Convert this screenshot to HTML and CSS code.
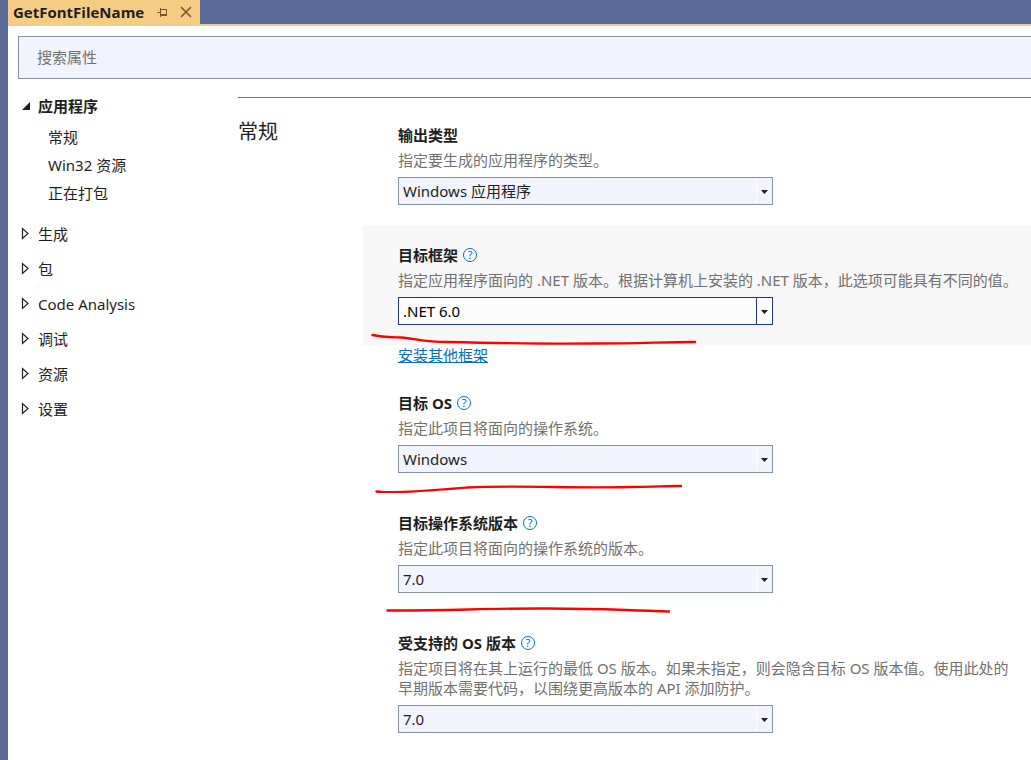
FILE: index.html
```html
<!DOCTYPE html>
<html lang="zh-CN">
<head>
<meta charset="utf-8">
<title>GetFontFileName</title>
<link rel="stylesheet" href="styles.css">
</head>
<body>
<div class="window">
  <header class="tabstrip">
    <div class="tab">
      <span class="tab-title">GetFontFileName</span>
      <button class="tab-button" type="button" aria-label="固定">
        <svg width="12" height="10" viewBox="0 0 12 10" fill="none" stroke="#81542a"><path d="M1 5.500H4M4.500 1V10M5 2.500H10.500V7M5 7.500H11M5 8.500H11" /></svg>
      </button>
      <button class="tab-button" type="button" aria-label="关闭">
        <svg width="12" height="12" viewBox="0 0 12 12" fill="none" stroke="#81542a" stroke-width="1.600"><path d="M1 1L11 11M11 1L1 11" /></svg>
      </button>
    </div>
  </header>
  <div class="document">
    <input class="search" type="search" placeholder="搜索属性" aria-label="搜索属性">
    <div class="columns">
      <nav class="tree">
        <a class="node current" href="#app"><svg class="twist" width="10" height="10" viewBox="0 0 10 10"><path d="M9 1V9H1Z" fill="#1e1e1e"/></svg>应用程序</a>
        <div class="children">
          <a class="leaf" href="#general">常规</a>
          <a class="leaf" href="#win32">Win32 资源</a>
          <a class="leaf" href="#packaging">正在打包</a>
        </div>
        <a class="node" href="#build"><svg class="twist" width="10" height="14" viewBox="0 0 10 14"><path d="M1.500 1.500V11.500L7 6.500Z" fill="none" stroke="#1e1e1e" stroke-width="1.200"/></svg>生成</a>
        <a class="node" href="#package"><svg class="twist" width="10" height="14" viewBox="0 0 10 14"><path d="M1.500 1.500V11.500L7 6.500Z" fill="none" stroke="#1e1e1e" stroke-width="1.200"/></svg>包</a>
        <a class="node" href="#analysis"><svg class="twist" width="10" height="14" viewBox="0 0 10 14"><path d="M1.500 1.500V11.500L7 6.500Z" fill="none" stroke="#1e1e1e" stroke-width="1.200"/></svg>Code Analysis</a>
        <a class="node" href="#debug"><svg class="twist" width="10" height="14" viewBox="0 0 10 14"><path d="M1.500 1.500V11.500L7 6.500Z" fill="none" stroke="#1e1e1e" stroke-width="1.200"/></svg>调试</a>
        <a class="node" href="#resources"><svg class="twist" width="10" height="14" viewBox="0 0 10 14"><path d="M1.500 1.500V11.500L7 6.500Z" fill="none" stroke="#1e1e1e" stroke-width="1.200"/></svg>资源</a>
        <a class="node" href="#settings"><svg class="twist" width="10" height="14" viewBox="0 0 10 14"><path d="M1.500 1.500V11.500L7 6.500Z" fill="none" stroke="#1e1e1e" stroke-width="1.200"/></svg>设置</a>
      </nav>
      <main class="section" id="general">
        <h1 class="section-title">常规</h1>
        <div class="fields">
          <div class="field">
            <div class="label-row"><label for="output">输出类型</label></div>
            <p class="hint">指定要生成的应用程序的类型。</p>
            <div class="combo"><select id="output"><option>Windows 应用程序</option></select><span class="arrow"></span></div>
          </div>
          <div class="field active">
            <div class="label-row"><label for="framework">目标框架</label><button class="help" type="button" aria-label="帮助">?</button></div>
            <p class="hint">指定应用程序面向的 .NET 版本。根据计算机上安装的 .NET 版本，此选项可能具有不同的值。</p>
            <div class="combo"><select id="framework"><option>.NET 6.0</option></select><span class="arrow"></span></div>
            <svg class="mark" width="350" height="20" viewBox="0 0 350 20"><path d="M9.500 10C18 12 25 12 38 12.500C54 14 62 17 84 17C130 18 185 19 230 18.500C275 18.500 302 17 332 17"/></svg>
          </div>
          <div class="link-row"><a href="#install">安装其他框架</a></div>
          <div class="field">
            <div class="label-row"><label for="os">目标 OS</label><button class="help" type="button" aria-label="帮助">?</button></div>
            <p class="hint">指定此项目将面向的操作系统。</p>
            <div class="combo"><select id="os"><option>Windows</option></select><span class="arrow"></span></div>
            <svg class="mark" width="350" height="20" viewBox="0 0 350 20"><path d="M13.500 18.500C28 21 75 17 105 14.500C150 12 215 15.500 265 14C290 14 302 13 318 13"/></svg>
          </div>
          <div class="field">
            <div class="label-row"><label for="osver">目标操作系统版本</label><button class="help" type="button" aria-label="帮助">?</button></div>
            <p class="hint">指定此项目将面向的操作系统的版本。</p>
            <div class="combo"><select id="osver"><option>7.0</option></select><span class="arrow"></span></div>
            <svg class="mark" width="350" height="20" viewBox="0 0 350 20"><path d="M24.500 17.500C85 18 125 15 185 15.500C240 15.500 252 17 306 18.500"/></svg>
          </div>
          <div class="field">
            <div class="label-row"><label for="supported">受支持的 OS 版本</label><button class="help" type="button" aria-label="帮助">?</button></div>
            <p class="hint">指定项目将在其上运行的最低 OS 版本。如果未指定，则会隐含目标 OS 版本值。使用此处的早期版本需要代码，以围绕更高版本的 API 添加防护。</p>
            <div class="combo"><select id="supported"><option>7.0</option></select><span class="arrow"></span></div>
          </div>
        </div>
      </main>
    </div>
  </div>
</div>
</body>
</html>
```
FILE: styles.css
```css
* { box-sizing: border-box; }

body {
  margin: 0;
  background: #5d6b99;
  color: #1e1e1e;
  font-family: "Noto Sans", "Noto Sans CJK SC", sans-serif;
  font-size: 15px;
  line-height: 20px;
}

button, input, select { font: inherit; color: inherit; }
a { color: inherit; text-decoration: none; }

.window {
  display: flex;
  flex-direction: column;
  min-height: 100vh;
  padding-left: 8px;
}

.tabstrip {
  display: flex;
  border-bottom: 2px solid #f5cc84;
}

.tab {
  display: flex;
  align-items: center;
  gap: 12px;
  height: 24px;
  padding: 0 8px 0 5px;
  background: #f5cc84;
}

.tab-title {
  font-family: "Open Sans", sans-serif;
  font-weight: 700;
}

.tab-button {
  display: flex;
  padding: 0;
  border: 0;
  background: none;
}

.document {
  flex: 1;
  padding: 10px 0 7px 10px;
  background: #fff;
}

.search {
  display: block;
  width: 100%;
  height: 43px;
  padding: 0 18px 2px;
  border: 1px solid #8591a9;
  border-right: 0;
  border-radius: 0;
  background: #f2f4fd;
  appearance: none;
}

.search::placeholder { color: #717171; opacity: 1; }

.columns { display: flex; }

.tree {
  flex: none;
  width: 220px;
  padding-top: 9px;
}

.node {
  display: flex;
  align-items: center;
  height: 35px;
  padding-left: 3px;
}

.twist {
  flex: none;
  margin-right: 7px;
}

.current { font-weight: 700; }

.children {
  padding-left: 30px;
  margin-bottom: 9px;
}

.leaf {
  display: block;
  line-height: 28px;
}

.section {
  flex: 1;
  display: flex;
  margin-top: 18px;
  border-top: 1px solid #717171;
}

.section-title {
  flex: none;
  width: 125px;
  margin: 20px 0 0;
  font-size: 20px;
  font-weight: 400;
  line-height: 28px;
}

.fields { flex: 1; padding-top: 7px; }

.field {
  position: relative;
  padding: 20px 10px 20px 35px;
}

.active { background: #f7f7f7; }

.label-row {
  display: flex;
  align-items: center;
  gap: 5px;
  height: 20px;
  margin-bottom: 5px;
  font-weight: 700;
}

.help {
  display: flex;
  align-items: center;
  justify-content: center;
  width: 14px;
  height: 14px;
  padding: 0;
  border: 1px solid #0070c0;
  border-radius: 50%;
  background: #fff;
  color: #0070c0;
  font-size: 11px;
  font-weight: 400;
  line-height: 12px;
}

.hint {
  margin: 0 0 7px;
  color: #717171;
}

.combo {
  position: relative;
  max-width: 375px;
}

.combo select {
  display: block;
  width: 100%;
  height: 28px;
  padding: 0 20px 0 4px;
  border: 1px solid #8591a9;
  border-radius: 0;
  background: #f2f4fd;
  appearance: none;
}

.arrow {
  position: absolute;
  top: 1px;
  right: 1px;
  bottom: 1px;
  width: 16px;
  border-left: 1px solid #fff;
  pointer-events: none;
}

.arrow::after {
  content: "";
  position: absolute;
  top: 12px;
  left: 4px;
  width: 7px;
  height: 4px;
  background: #1e1e1e;
  clip-path: polygon(0 0, 100% 0, 50% 100%);
}

.active select { border-color: #1f377f; background: #fcfcfc; color: #000; }
.active .arrow { border-left-color: #1f377f; }

.link-row { padding: 0 0 8px 35px; }
.link-row a { color: #0070c0; text-decoration: underline; }

.mark {
  position: absolute;
  left: 0;
  bottom: 0;
  fill: none;
  stroke: #f00;
  stroke-width: 2.400;
  stroke-linecap: round;
}
```
